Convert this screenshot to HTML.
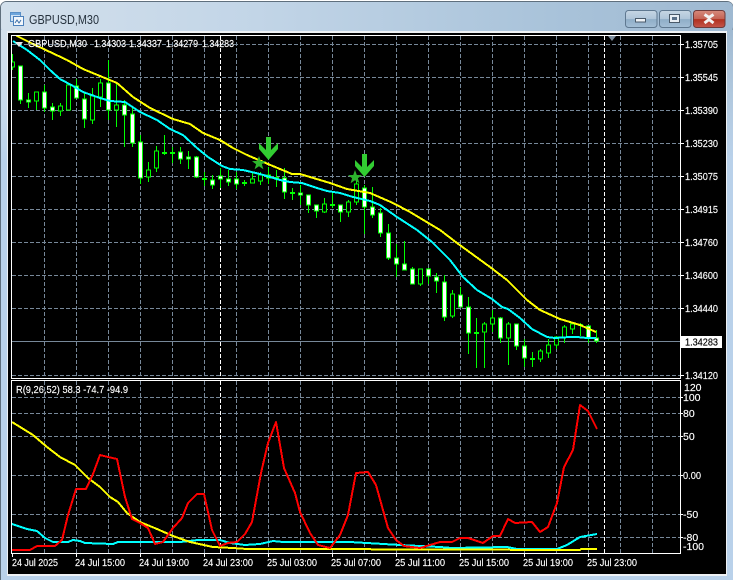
<!DOCTYPE html>
<html><head><meta charset="utf-8"><title>GBPUSD,M30</title>
<style>
html,body{margin:0;padding:0;background:#fff;width:737px;height:580px;overflow:hidden}
svg{display:block;position:absolute;left:0;top:0}
text{font-family:"Liberation Sans",sans-serif;font-size:10.5px;fill:#fff;stroke:#fff;stroke-width:.15}
.c{shape-rendering:crispEdges}
</style></head><body>
<svg width="737" height="580" viewBox="0 0 737 580" xmlns="http://www.w3.org/2000/svg">
<defs>
<linearGradient id="tb" x1="0" y1="0" x2="1" y2="0"><stop offset="0" stop-color="#d3e0ec"/><stop offset=".35" stop-color="#c2d5e7"/><stop offset=".75" stop-color="#a9c3da"/><stop offset="1" stop-color="#9fb9d1"/></linearGradient>
<linearGradient id="bd" x1="0" y1="0" x2="0" y2="1"><stop offset="0" stop-color="#c9dcec" stop-opacity="0"/><stop offset="1" stop-color="#b9d1ea"/></linearGradient>
<linearGradient id="bt" x1="0" y1="0" x2="0" y2="1"><stop offset="0" stop-color="#c6d6e4"/><stop offset=".5" stop-color="#afc5d9"/><stop offset=".52" stop-color="#8fadc7"/><stop offset="1" stop-color="#a4bfd6"/></linearGradient>
<linearGradient id="cl" x1="0" y1="0" x2="0" y2="1"><stop offset="0" stop-color="#d68a7c"/><stop offset=".5" stop-color="#c46355"/><stop offset=".52" stop-color="#b0301f"/><stop offset="1" stop-color="#c4554a"/></linearGradient>
<clipPath id="p1"><rect x="12" y="36" width="668" height="342"/></clipPath>
<clipPath id="p2"><rect x="12" y="381" width="668" height="172"/></clipPath>
</defs>

<!-- window frame -->
<rect x="0" y="0" width="737" height="580" fill="#fff"/>
<rect x="0.5" y="1.5" width="732.5" height="590" rx="6" fill="#b9d1ea" stroke="#5f6f7d"/>
<rect x="1" y="2" width="732" height="30" rx="5" fill="url(#tb)"/>
<rect x="1" y="30" width="732" height="130" fill="url(#tb)"/>
<rect x="1" y="30" width="732" height="130" fill="url(#bd)"/>
<rect x="1" y="160" width="732" height="420" fill="#b9d1ea"/>
<rect x="733" y="0" width="4" height="580" fill="#fff"/>
<rect x="7" y="31" width="720" height="545" fill="#eef1f4"/>
<rect x="8" y="33" width="718" height="541" fill="#000"/>

<!-- title icon -->
<g class="c">
<rect x="10.5" y="12.500" width="10" height="9" fill="#cfe2f5" stroke="#5a8fc6"/>
<rect x="13.500" y="16.500" width="10" height="9" fill="#f2f7fc" stroke="#4b80bb"/>
<rect x="11" y="13" width="9" height="2" fill="#6ea6dc"/>
</g>
<path d="M15 23l2-3 2 3 2-3" fill="none" stroke="#3c6fa8" stroke-width="1"/>
<text x="29" y="24" style="font-size:12.5px;fill:#26323e;stroke:none" textLength="70" lengthAdjust="spacingAndGlyphs">GBPUSD,M30</text>

<!-- window buttons -->
<rect x="625.500" y="10.500" width="31.500" height="17" rx="3" fill="url(#bt)" stroke="#5f7890"/>
<rect x="659.500" y="10.500" width="31.500" height="17" rx="3" fill="url(#bt)" stroke="#5f7890"/>
<rect x="693.500" y="10.500" width="31.500" height="17" rx="3" fill="url(#cl)" stroke="#6e3a3a"/>
<rect x="635.500" y="18.500" width="10" height="3.500" fill="#eef2f6" stroke="#4a5a6a"/>
<rect x="669.500" y="14.500" width="10" height="8" fill="#e8eef4" stroke="#4a5a6a"/>
<rect x="672" y="17" width="5" height="3" fill="#5a7088"/>
<path d="M704.500 14.500l4.500 3 4.500-3M704.500 23l4.500-3.500 4.500 3.500" fill="none" stroke="#f2f2f2" stroke-width="3"/>

<!-- grid -->
<g class="c" fill="none" stroke="#778899" stroke-width="1" stroke-dasharray="4 2">
<path clip-path="url(#p1)" d="M12 44.500H680M12 77.500H680M12 110.500H680M12 143.500H680M12 176.500H680M12 209.500H680M12 242.500H680M12 275.500H680M12 308.500H680M12 375.500H680"/>
<path clip-path="url(#p1)" d="M44.500 36V378M76.500 36V378M108.500 36V378M140.500 36V378M172.500 36V378M204.500 36V378M236.500 36V378M268.500 36V378M300.500 36V378M332.500 36V378M364.500 36V378M396.500 36V378M428.500 36V378M460.500 36V378M492.500 36V378M524.500 36V378M556.500 36V378M588.500 36V378M620.500 36V378M652.500 36V378"/>
<path clip-path="url(#p2)" d="M12 397.500H680M12 413.500H680M12 436.500H680M12 475.500H680M12 514.500H680M12 537.500H680"/>
<path clip-path="url(#p2)" d="M44.500 381V553M76.500 381V553M108.500 381V553M140.500 381V553M172.500 381V553M204.500 381V553M236.500 381V553M268.500 381V553M300.500 381V553M332.500 381V553M364.500 381V553M396.500 381V553M428.500 381V553M460.500 381V553M492.500 381V553M524.500 381V553M556.500 381V553M588.500 381V553M620.500 381V553M652.500 381V553"/>
<path stroke="#fff" d="M220.500 36V378M604.500 36V378M220.500 381V553M604.500 381V553"/>
</g>
<path class="c" d="M12 341.500H680" stroke="#778899" fill="none"/>

<!-- candle wicks -->
<path class="c" clip-path="url(#p1)" fill="none" stroke="#0f0" d="M12.500 54V70M20.500 66V104M28.500 93V108M36.500 92V110M44.500 85V112M52.500 103V120M60.500 103V116M68.500 85V110M76.500 79V98M84.500 93V128M92.500 88V124M100.500 79V107M108.500 60V120M116.500 84V127M124.500 100V147M132.500 108V147M140.500 135V184M148.500 162V182M156.500 146V172M164.500 135V155M172.500 147V163M180.500 147V164M188.500 151V169M196.500 156V178M204.500 172V186M212.500 175V189M220.500 168V188M228.500 170V186M236.500 172V189M244.500 180V186M252.500 172V183M260.500 172V185M268.500 167V184M276.500 170V187M284.500 168V199M292.500 188V200M300.500 185V205M308.500 195V213M316.500 205V218M324.500 198V213M332.500 192V208M340.500 205V222M348.500 200V217M356.500 180V205M364.500 185V234M372.500 187V218M380.500 208V237M388.500 224V260M396.500 244V277M404.500 241V270M412.500 267V284M420.500 269V286M428.500 268V284M436.500 273V293M444.500 275V321M452.500 290V318M460.500 287V307M468.500 297V354M476.500 318V368M484.500 322V368M492.500 310V332M500.500 317V343M508.500 322V365M516.500 324V350M524.500 339V367M532.500 352V367M540.500 349V362M548.500 339V358M556.500 336V349M564.500 325V343M572.500 323V334M580.500 323V336M588.500 325V343M596.500 330V343"/>
<!-- hollow bodies -->
<path class="c" clip-path="url(#p1)" fill="#000" stroke="#0f0" d="M10.500 62h4v5h-4zM34.500 92h4v9h-4zM58.500 106h4v5h-4zM66.500 85h4v25h-4zM90.500 96h4v24h-4zM98.500 83h4v14h-4zM114.500 105h4v5h-4zM146.500 170h4v7h-4zM154.500 151h4v17h-4zM250.500 179h4v4h-4zM258.500 175h4v6h-4zM322.500 204h4v8h-4zM346.500 202h4v10h-4zM354.500 184h4v18h-4zM418.500 269h4v15h-4zM450.500 294h4v22h-4zM482.500 324h4v8h-4zM490.500 318h4v6h-4zM506.500 324h4v14h-4zM538.500 351h4v8h-4zM546.500 345h4v8h-4zM554.500 337h4v8h-4zM562.500 327h4v10h-4zM570.500 324h4v5h-4z"/>
<!-- white bodies -->
<path class="c" clip-path="url(#p1)" fill="#fff" stroke="#0f0" d="M18.500 66h4v34h-4zM26.500 100h4v2h-4zM42.500 92h4v16h-4zM50.500 107h4v4h-4zM74.500 86h4v12h-4zM82.500 99h4v20h-4zM106.500 83h4v27h-4zM122.500 105h4v10h-4zM130.500 114h4v29h-4zM138.500 142h4v36h-4zM178.500 152h4v7h-4zM186.500 157h4v2h-4zM194.500 157h4v20h-4zM210.500 180h4v5h-4zM218.500 176h4v3h-4zM226.500 179h4v3h-4zM234.500 179h4v5h-4zM266.500 175h4v3h-4zM282.500 178h4v14h-4zM298.500 193h4v2h-4zM306.500 195h4v10h-4zM314.500 205h4v6h-4zM338.500 205h4v7h-4zM362.500 188h4v19h-4zM370.500 207h4v8h-4zM378.500 213h4v20h-4zM386.500 233h4v25h-4zM394.500 258h4v6h-4zM402.500 264h4v6h-4zM410.500 269h4v15h-4zM426.500 269h4v7h-4zM434.500 277h4v4h-4zM442.500 282h4v35h-4zM458.500 295h4v12h-4zM466.500 307h4v26h-4zM498.500 318h4v20h-4zM514.500 324h4v22h-4zM522.500 346h4v12h-4zM586.500 326h4v12h-4zM594.500 338h4v3h-4z"/>
<!-- doji -->
<path class="c" clip-path="url(#p1)" fill="#0f0" d="M162 152h5v2h-5zM170 152h5v2h-5zM202 178h5v2h-5zM242 182h5v2h-5zM274 177h5v2h-5zM290 192h5v2h-5zM330 204h5v2h-5zM474 332h5v2h-5zM530 358h5v2h-5zM578 324h5v2h-5z"/>

<!-- MAs -->
<g class="c" clip-path="url(#p1)" fill="none" stroke-width="2" stroke-linejoin="round">
<path stroke="#ff0" d="M14 33L17 36 33 44 50 52 67 60 83 69 100 76 117 83 133 97 150 108 173 119 190 124 203 133 220 140 233 148 247 155 268 164 292 174 300 174 330 183 347 189 370 193 393 203 410 212 430 224 440 230 457 243 490 267 507 280 527 300 540 310 560 319 580 325 596 332"/>
<path stroke="#0ff" d="M13 41L27 50 40 60 50 70 60 79 73 86 83 92 100 98 110 101 125 102 140 112 157 120 170 129 183 135 197 148 208 157 222 166 230 169 243 170 260 174 280 180 290 182 302 183 317 188 327 191 340 193 353 197 370 201 380 205 397 217 417 230 432 242 450 260 463 277 477 290 492 299 502 307 508 309 520 318 532 329 547 337 555 338 570 337 577 337 587 338 596 338"/>
</g>

<!-- arrows and stars -->
<path fill="#32cd32" d="M266 137h5v13l7-7v6l-9.500 11-9.500-11v-6l7 7z"/>
<path fill="#32cd32" d="M362 154h5v13l7-7v6l-9.500 11-9.500-11v-6l7 7z"/>
<path fill="#2db52d" d="M259 156l1.800 5 5.200.1-4.100 3.200 1.500 5-4.400-3-4.400 3 1.500-5-4.100-3.200 5.200-.1z"/>
<path fill="#2db52d" d="M355 170l1.800 5 5.200.1-4.100 3.200 1.500 5-4.400-3-4.400 3 1.500-5-4.100-3.200 5.200-.1z"/>
<path fill="#7f8f9f" d="M608 36h8l-4 5z"/>

<!-- sub window lines -->
<g class="c" clip-path="url(#p2)" fill="none" stroke-width="2" stroke-linejoin="round">
<path stroke="#0ff" d="M12 524L27 529 37 531 45 538 53 542 68 542 73 540 80 541 85 543 113 544 118 542 140 542 180 542 198 540 220 540 230 543 245 545 260 544 273 541 283 542 300 542 350 542 400 545 440 547 452 548 507 547 517 549 557 549 567 545 580 537 597 534"/>
<path stroke="#ff0" d="M12 422L33 435 47 447 60 457 75 465 88 478 100 487 110 497 118 502 127 513 140 522 157 529 173 536 190 542 213 547 233 548 247 549 300 549 580 550 581 549 597 549"/>
<path stroke="#f00" d="M12 550L30 550 37 546 55 546 62 540 68 515 76 489 86 489 93 474 100 455 108 457 117 459 125 497 132 519 140 523 148 528 155 544 163 542 173 528 182 518 188 503 197 494 204 494 212 530 220 546 228 543 237 542 245 534 252 522 261 473 268 443 276 422 284 468 295 493 300 512 310 533 318 545 330 548 340 535 348 515 356 473 368 472 376 485 388 528 396 540 404 546 420 548 430 545 440 542 452 542 460 538 468 538 483 543 493 536 500 536 508 519 515 523 532 522 540 532 548 527 557 503 564 467 573 450 580 405 588 411 597 429"/>
</g>

<!-- frames and ticks -->
<g class="c" fill="none" stroke="#fff">
<path d="M11.500 35.500H680.500V378.500H11.500Z"/>
<path d="M11.500 380.500H680.500V553.500H11.500Z"/>
<path d="M680 44.500h4M680 77.500h4M680 110.500h4M680 143.500h4M680 176.500h4M680 209.500h4M680 242.500h4M680 275.500h4M680 308.500h4M680 375.500h4M680 397.500h3M680 413.500h3M680 436.500h3M680 475.500h3M680 514.500h3M680 537.500h3"/>
<path d="M12.500 553v4M76.500 553v4M140.500 553v4M204.500 553v4M268.500 553v4M332.500 553v4M396.500 553v4M460.500 553v4M524.500 553v4M588.500 553v4"/>
</g>

<!-- header -->
<path fill="#e8e8e8" d="M15 42h8l-4 5z"/>
<text x="28" y="47" textLength="59" lengthAdjust="spacingAndGlyphs">GBPUSD,M30</text>
<text x="94" y="47" textLength="32" lengthAdjust="spacingAndGlyphs">1.34303</text>
<text x="129" y="47" textLength="33" lengthAdjust="spacingAndGlyphs">1.34337</text>
<text x="166" y="47" textLength="32" lengthAdjust="spacingAndGlyphs">1.34279</text>
<text x="202" y="47" textLength="32" lengthAdjust="spacingAndGlyphs">1.34283</text>
<text x="16" y="393" textLength="112" lengthAdjust="spacingAndGlyphs">R(9,26,52) 58.3 -74.7 -94.9</text>

<!-- price axis -->
<text x="685" y="48" textLength="33" lengthAdjust="spacingAndGlyphs">1.35705</text>
<text x="685" y="81" textLength="33" lengthAdjust="spacingAndGlyphs">1.35545</text>
<text x="685" y="114" textLength="33" lengthAdjust="spacingAndGlyphs">1.35390</text>
<text x="685" y="147" textLength="33" lengthAdjust="spacingAndGlyphs">1.35230</text>
<text x="685" y="180" textLength="33" lengthAdjust="spacingAndGlyphs">1.35075</text>
<text x="685" y="213" textLength="33" lengthAdjust="spacingAndGlyphs">1.34915</text>
<text x="685" y="246" textLength="33" lengthAdjust="spacingAndGlyphs">1.34760</text>
<text x="685" y="279" textLength="33" lengthAdjust="spacingAndGlyphs">1.34600</text>
<text x="685" y="312" textLength="33" lengthAdjust="spacingAndGlyphs">1.34440</text>
<text x="685" y="379" textLength="33" lengthAdjust="spacingAndGlyphs">1.34120</text>
<rect class="c" x="681" y="336" width="41" height="12" fill="#fff"/>
<text x="685" y="345.500" style="fill:#000;stroke:#000" textLength="33" lengthAdjust="spacingAndGlyphs">1.34283</text>

<!-- indicator axis -->
<text x="684" y="391">120</text>
<text x="683" y="401">100</text>
<text x="683" y="417">80</text>
<text x="683" y="440">50</text>
<text x="683" y="479" textLength="18" lengthAdjust="spacingAndGlyphs">0.00</text>
<text x="683" y="518">-50</text>
<text x="683" y="541">-80</text>
<text x="683" y="550">-100</text>

<!-- time axis -->
<text x="12" y="566" textLength="46" lengthAdjust="spacingAndGlyphs">24 Jul 2025</text>
<text x="75" y="566" textLength="50" lengthAdjust="spacingAndGlyphs">24 Jul 15:00</text>
<text x="139" y="566" textLength="50" lengthAdjust="spacingAndGlyphs">24 Jul 19:00</text>
<text x="203" y="566" textLength="50" lengthAdjust="spacingAndGlyphs">24 Jul 23:00</text>
<text x="267" y="566" textLength="50" lengthAdjust="spacingAndGlyphs">25 Jul 03:00</text>
<text x="331" y="566" textLength="50" lengthAdjust="spacingAndGlyphs">25 Jul 07:00</text>
<text x="395" y="566" textLength="50" lengthAdjust="spacingAndGlyphs">25 Jul 11:00</text>
<text x="459" y="566" textLength="50" lengthAdjust="spacingAndGlyphs">25 Jul 15:00</text>
<text x="523" y="566" textLength="50" lengthAdjust="spacingAndGlyphs">25 Jul 19:00</text>
<text x="587" y="566" textLength="50" lengthAdjust="spacingAndGlyphs">25 Jul 23:00</text>
</svg>
</body></html>
